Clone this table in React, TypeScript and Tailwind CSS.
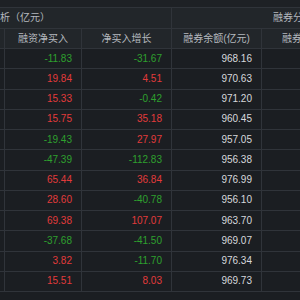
import React from "react";

const rows: [string, string, string][] = [
  ["-11.83", "-31.67", "968.16"],
  ["19.84", "4.51", "970.63"],
  ["15.33", "-0.42", "971.20"],
  ["15.75", "35.18", "960.45"],
  ["-19.43", "27.97", "957.05"],
  ["-47.39", "-112.83", "956.38"],
  ["65.44", "36.84", "976.99"],
  ["28.60", "-40.78", "956.10"],
  ["69.38", "107.07", "963.70"],
  ["-37.68", "-41.50", "969.07"],
  ["3.82", "-11.70", "976.34"],
  ["15.51", "8.03", "969.73"],
];

function colorOf(v: string) {
  return v.startsWith("-") ? "text-[#2ea02e]" : "text-[#e23b3b]";
}

export default function App() {
  return (
    <div
      className="w-[300px] h-[300px] overflow-hidden bg-[#1b1e22] text-[10px] leading-none"
      style={{ fontFamily: '"Liberation Sans", "Noto Sans CJK SC", sans-serif' }}
    >
      <div className="h-[8px] bg-[#1e2125] border-b border-[#30343a]" />
      <div className="flex h-[21px] bg-[#22262a] border-b border-[#30343a] text-[#b4b8be]">
        <div className="w-[172px] shrink-0 border-r border-[#30343a] flex items-center overflow-hidden">
          <span className="ml-[-30px] whitespace-nowrap">融资分析（亿元）</span>
        </div>
        <div className="flex-1 flex items-center overflow-hidden">
          <span className="ml-[101px] whitespace-nowrap">融券分析（亿元）</span>
        </div>
      </div>
      <div className="flex h-[20px] bg-[#22262a] border-b border-[#30343a] text-[#b4b8be]">
        <div className="w-[5px] shrink-0 border-r border-[#30343a]" />
        <div className="w-[77px] shrink-0 border-r border-[#30343a] flex items-center justify-center whitespace-nowrap">
          融资净买入
        </div>
        <div className="w-[90px] shrink-0 border-r border-[#30343a] flex items-center justify-center whitespace-nowrap">
          净买入增长
        </div>
        <div className="w-[90px] shrink-0 border-r border-[#30343a] flex items-center justify-center whitespace-nowrap">
          融券余额(亿元)
        </div>
        <div className="flex-1 flex items-center overflow-hidden">
          <span className="ml-[20px] whitespace-nowrap">融券卖出额</span>
        </div>
      </div>
      {rows.map((r, i) => (
        <div key={i} className="flex h-[20.25px] border-b border-[#30343a]">
          <div className="w-[5px] shrink-0 border-r border-[#30343a]" />
          <div className={`w-[77px] shrink-0 border-r border-[#30343a] flex items-center justify-end pr-[9px] ${colorOf(r[0])}`}>
            {r[0]}
          </div>
          <div className={`w-[90px] shrink-0 border-r border-[#30343a] flex items-center justify-end pr-[9px] ${colorOf(r[1])}`}>
            {r[1]}
          </div>
          <div className="w-[90px] shrink-0 border-r border-[#30343a] flex items-center justify-end pr-[9px] text-[#d6d8dc]">
            {r[2]}
          </div>
          <div className="flex-1" />
        </div>
      ))}
    </div>
  );
}
